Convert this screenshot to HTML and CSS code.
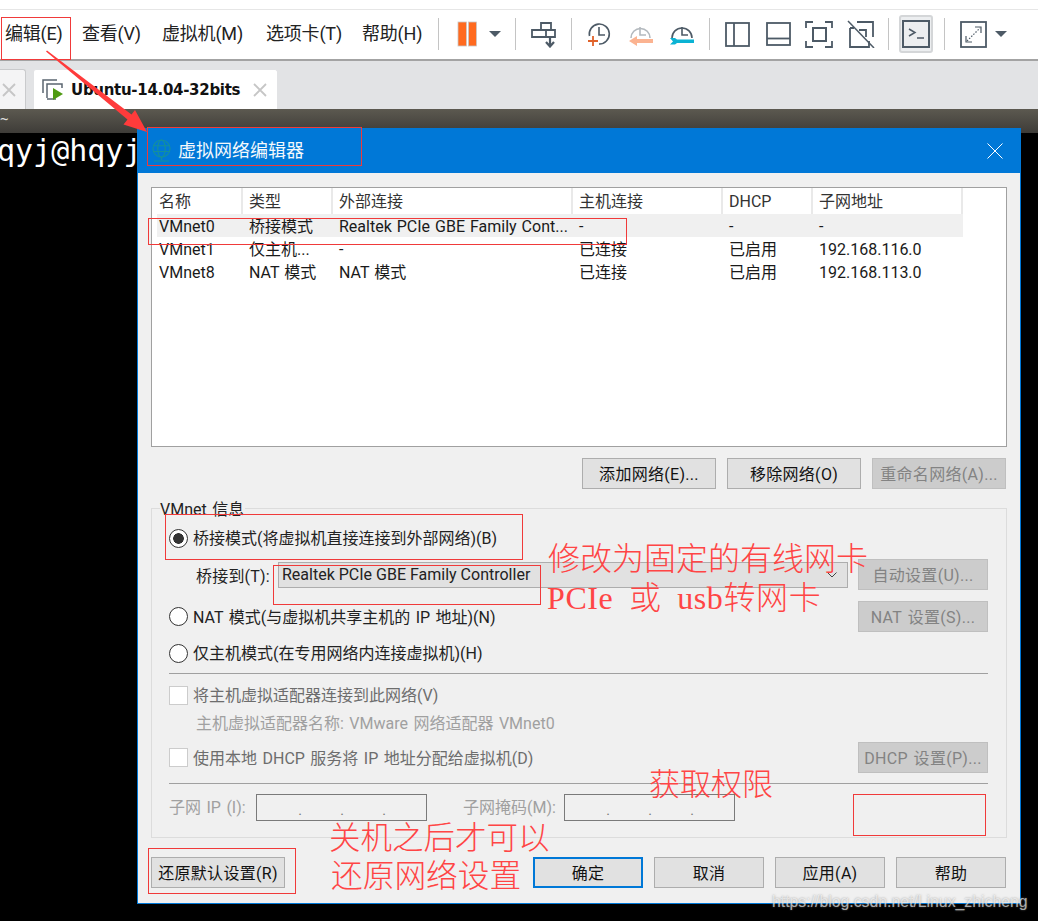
FILE: index.html
```html
<!DOCTYPE html>
<html lang="zh-CN">
<head>
<meta charset="utf-8">
<title>虚拟网络编辑器</title>
<link rel="stylesheet" href="styles.css">
</head>
<body>
<div class="app">
  <header class="toolbar">
    <nav class="menu">
      <span class="menu-item">编辑(E)</span>
      <span class="menu-item">查看(V)</span>
      <span class="menu-item">虚拟机(M)</span>
      <span class="menu-item">选项卡(T)</span>
      <span class="menu-item">帮助(H)</span>
    </nav>
    <i class="sep"></i>
    <svg class="ico pause" viewBox="0 0 20 28"><rect x="1" y="2" width="8.5" height="24" fill="#ff6a1f" stroke="#c9c9c9" stroke-width=".8"/><rect x="11.5" y="2" width="8" height="24" fill="#ff6a1f" stroke="#c9c9c9" stroke-width=".8"/></svg>
    <svg class="caret c1" viewBox="0 0 12 6"><path d="M0 0h12L6 6z" fill="#4d5a66"/></svg>
    <i class="sep s1"></i>
    <svg class="ico i-send" viewBox="0 0 28 28" fill="none" stroke="#4d5a66" stroke-width="1.8"><path d="M12 10V3h10v7M3 10h23v7H3zM17 10v7"/><path d="M21 17v9M17 22l4 4.5 4-4.5" stroke-width="2.2"/></svg>
    <i class="sep s2"></i>
    <svg class="ico i-clock" viewBox="0 0 28 28" fill="none" stroke="#4d5a66" stroke-width="1.6"><path d="M4.5 16A10 10 0 1 1 14 24"/><path d="M14 7v8h6"/><path d="M8 16v10M3 21h10" stroke="#e0622a" stroke-width="1.8"/></svg>
    <svg class="ico i-rev" viewBox="0 0 28 28" fill="none" stroke="#b3b9be" stroke-width="1.6"><path d="M4 18A9.5 9.5 0 1 1 23 18"/><path d="M13 7v8h6"/><path d="M26 19h-16v-3l-8 5 8 5v-3h16z" fill="#fbb391" stroke="none"/></svg>
    <svg class="ico i-mgr" viewBox="0 0 28 28" fill="none" stroke="#4d5a66" stroke-width="1.6"><path d="M4 18A10 10 0 1 1 24 18"/><path d="M14 7v8h6"/><path d="M2 18h5l2 1.500h17v3.500H9l-2 1.500H2l3-3z" fill="#0bb3d4" stroke="none"/></svg>
    <i class="sep s3"></i>
    <svg class="ico i-l1" viewBox="0 0 28 28" fill="none" stroke="#4d5a66" stroke-width="1.8"><rect x="2" y="3" width="23" height="23"/><path d="M10 3v23"/></svg>
    <svg class="ico i-l2" viewBox="0 0 28 28" fill="none" stroke="#4d5a66" stroke-width="1.8"><rect x="2" y="3" width="23" height="22"/><path d="M2 18.500h23"/></svg>
    <svg class="ico i-l3" viewBox="0 0 28 28" fill="none" stroke="#4d5a66" stroke-width="1.8"><path d="M1 8V2h7M20 2h7v6M27 21v6h-7M8 27H1v-6"/><rect x="8" y="8" width="13" height="13" stroke-width="2"/></svg>
    <svg class="ico i-l4" viewBox="0 0 28 28" fill="none" stroke="#4d5a66" stroke-width="1.8"><path d="M3 8v19h19v-6M10 2h16v15M12 10h7v7M3 8h4"/><path d="M1 1l26 27" stroke-width="1.500"/></svg>
    <i class="sep s5"></i>
    <span class="term-btn">
      <svg class="term" viewBox="0 0 28 28" fill="none" stroke="#4d5a66" stroke-width="2"><rect x="1" y="1" width="26" height="26"/><path d="M7 9l6 3.500-6 3.500M15 18h7" stroke-width="1.500"/></svg>
    </span>
    <i class="sep s4"></i>
    <svg class="ico i-full" viewBox="0 0 28 28" fill="none" stroke="#4d5a66" stroke-width="1.800"><rect x="2" y="2" width="25" height="25"/><path d="M8 21L21 8" stroke-dasharray="1.500 1.500" stroke-width="1.200"/><path d="M16 7h6v6M7 16v6h6" stroke-width="1.200"/></svg>
    <svg class="caret c2" viewBox="0 0 12 6"><path d="M0 0h12L6 6z" fill="#4d5a66"/></svg>
  </header>

  <div class="tabbar">
    <div class="tab tab-off"><svg class="tab-x" viewBox="0 0 14 14" fill="none" stroke="#c6c6c6" stroke-width="1.800"><path d="M1 1l12 12M13 1L1 13"/></svg></div>
    <div class="tab tab-on">
      <svg class="tab-ico" viewBox="0 0 22 22" fill="none" stroke="#5b6670" stroke-width="1.500"><path d="M1 14V1h14M5 19V5h15v4M5 20h9"/><path d="M11 9l10 6-10 6z" fill="#4f9a12" stroke="none"/></svg>
      <span class="tab-name">Ubuntu-14.04-32bits</span>
      <svg class="tab-x" viewBox="0 0 14 14" fill="none" stroke="#c6c6c6" stroke-width="1.800"><path d="M1 1l12 12M13 1L1 13"/></svg>
    </div>
  </div>

  <div class="terminal">
    <div class="term-head">~</div>
    <div class="term-line">qyj@hqyj</div>
  </div>
</div>

<section class="dialog">
  <div class="titlebar">
    <svg class="globe" viewBox="0 0 20 24" fill="none" stroke="#14909c" stroke-width="1.200"><circle cx="10" cy="10" r="9"/><ellipse cx="10" cy="10" rx="4" ry="9"/><path d="M1 7h18M1 13h18M10 19v3M2 23h16"/></svg>
    <span class="title">虚拟网络编辑器</span>
    <svg class="close" viewBox="0 0 16 16" fill="none" stroke="#fff" stroke-width="1"><path d="M.5.5l15 15M15.500.5l-15 15"/></svg>
  </div>
  <div class="body">
    <div class="list">
      <div class="row head"><span>名称</span><span>类型</span><span>外部连接</span><span>主机连接</span><span>DHCP</span><span>子网地址</span></div>
      <div class="row sel"><span>VMnet0</span><span>桥接模式</span><span>Realtek PCIe GBE Family Cont...</span><span>-</span><span>-</span><span>-</span></div>
      <div class="row"><span>VMnet1</span><span>仅主机...</span><span>-</span><span>已连接</span><span>已启用</span><span>192.168.116.0</span></div>
      <div class="row"><span>VMnet8</span><span>NAT 模式</span><span>NAT 模式</span><span>已连接</span><span>已启用</span><span>192.168.113.0</span></div>
    </div>

    <div class="actions">
      <button class="btn wide">添加网络(E)...</button>
      <button class="btn wide">移除网络(O)</button>
      <button class="btn wide off">重命名网络(A)...</button>
    </div>

    <div class="group">
      <div class="legend">VMnet 信息</div>
      <div class="opt r1"><i class="radio on"></i>桥接模式(将虚拟机直接连接到外部网络)(B)</div>
      <div class="bridge">
        <span class="bridge-label">桥接到(T):</span>
        <div class="combo"><span>Realtek PCIe GBE Family Controller</span>
          <svg class="chev" viewBox="0 0 10 6" fill="none" stroke="#444" stroke-width="1"><path d="M.5.500L5 5l4.500-4.500"/></svg>
        </div>
        <button class="btn side off">自动设置(U)...</button>
      </div>
      <div class="split r3">
        <div class="opt"><i class="radio"></i>NAT 模式(与虚拟机共享主机的 IP 地址)(N)</div>
        <button class="btn side off">NAT 设置(S)...</button>
      </div>
      <div class="opt r4"><i class="radio"></i>仅主机模式(在专用网络内连接虚拟机)(H)</div>
      <hr class="rule r5">
      <div class="opt dim r6"><i class="check"></i>将主机虚拟适配器连接到此网络(V)</div>
      <div class="adapter">主机虚拟适配器名称: VMware 网络适配器 VMnet0</div>
      <div class="split r8">
        <div class="opt dim"><i class="check"></i>使用本地 DHCP 服务将 IP 地址分配给虚拟机(D)</div>
        <button class="btn side off">DHCP 设置(P)...</button>
      </div>
      <hr class="rule r9">
      <div class="subnet">
        <span class="sub-l1">子网 IP (I):</span>
        <div class="ip"><b>.</b><b>.</b><b>.</b></div>
        <span class="sub-l2">子网掩码(M):</span>
        <div class="ip"><b>.</b><b>.</b><b>.</b></div>
      </div>
    </div>

    <div class="footer">
      <button class="btn wide">还原默认设置(R)</button>
      <div class="footer-right">
        <button class="btn mid primary">确定</button>
        <button class="btn mid">取消</button>
        <button class="btn mid">应用(A)</button>
        <button class="btn mid">帮助</button>
      </div>
    </div>
  </div>
</section>

<div class="marks">
  <i class="box b-menu"></i>
  <i class="box b-title"></i>
  <i class="box b-row"></i>
  <i class="box b-radio"></i>
  <i class="box b-combo"></i>
  <i class="box b-empty"></i>
  <i class="box b-reset"></i>
  <svg class="arrow" viewBox="0 0 1038 921"><path d="M47 50.500L131.500 114.500 135 110 147 132 123.500 124.500 127.500 119.500 46 51.500z" fill="#ff3b3b"/></svg>
  <span class="note n1">修改为固定的有线网卡</span>
  <span class="note n2">PCIe 或 usb转网卡</span>
  <span class="note n3">获取权限</span>
  <span class="note n4">关机之后才可以</span>
  <span class="note n5">还原网络设置</span>
  <span class="wm">https://blog.csdn.net/Linux_zhicheng</span>
</div>
</body>
</html>
```
FILE: styles.css
```css
* { box-sizing: border-box; }
html, body { margin: 0; padding: 0; }
body {
  width: 1038px;
  height: 921px;
  overflow: hidden;
  position: relative;
  background: #000;
  font-family: Roboto, "Noto Sans CJK SC", sans-serif;
  font-size: 16px;
  color: #1a1a1a;
}
.app { display: flex; flex-direction: column; height: 921px; }

/* toolbar */
.toolbar {
  height: 61px;
  flex: none;
  display: flex;
  align-items: center;
  padding-top: 9px;
  background: #fff;
  border-bottom: 2px solid #a3a3a3;
  box-shadow: inset 0 9px 0 #fff, inset 0 10px 0 #e6e6e6;
}
.menu {
  width: 438px;
  flex: none;
  display: grid;
  grid-template-columns: 77px 80px 104px 96px auto;
  padding-left: 5px;
}
.menu-item { font-size: 18px; line-height: 24px; white-space: nowrap; color: #222; letter-spacing: -.2px; }
.sep { width: 1px; height: 32px; background: #c4c4c4; flex: none; }
.ico { width: 28px; height: 28px; flex: none; }
.pause { width: 20px; margin-left: 18px; }
.caret { width: 12px; height: 6px; flex: none; }
.c1 { margin-left: 12px; }
.s1 { margin-left: 14px; }
.i-send { margin-left: 13px; }
.s2 { margin-left: 14px; }
.i-clock { margin-left: 13px; }
.i-rev { margin-left: 14px; }
.i-mgr { margin-left: 13px; }
.s3 { margin-left: 13px; }
.i-l1 { margin-left: 14px; }
.i-l2 { margin-left: 13px; }
.i-l3 { margin-left: 12px; }
.i-l4 { margin-left: 14px; }
.s5 { margin-left: 13px; }
.term-btn {
  width: 34px;
  height: 38px;
  margin-left: 10px;
  display: flex;
  align-items: center;
  justify-content: center;
  background: #eceef0;
  border: 2px solid #d4d6d8;
  border-radius: 3px;
  flex: none;
}
.term { width: 28px; height: 28px; }
.s4 { margin-left: 11px; }
.i-full { margin-left: 14px; }
.c2 { margin-left: 8px; }

/* tabs */
.tabbar {
  height: 48px;
  flex: none;
  display: flex;
  align-items: flex-end;
  gap: 7px;
  background: #e2e3e5;
}
.tab {
  height: 40px;
  background: #f4f4f5;
  border: 1px solid #c9cacc;
  border-bottom: 0;
  border-radius: 3px 3px 0 0;
  display: flex;
  align-items: center;
}
.tab-off { width: 26px; border-left: 0; padding-left: 2px; border-top-left-radius: 0; }
.tab-on { width: 245px; background: #fff; border-color: #e2e3e5; padding-left: 8px; }
.tab-ico { width: 22px; height: 22px; flex: none; }
.tab-name {
  margin-left: 7px;
  width: 182px;
  font: bold 15px/22px "DejaVu Sans", sans-serif;
  letter-spacing: -.3px;
  color: #111;
  white-space: nowrap;
}
.tab-x { width: 14px; height: 14px; flex: none; }

/* terminal */
.terminal { flex: 1; background: #000; color: #fff; overflow: hidden; }
.term-head {
  height: 24px;
  padding-top: 1px;
  background: linear-gradient(#5c5950, #3e3c38);
  color: #ddd;
  font: 14px/18px "DejaVu Sans Mono", monospace;
}
.term-line {
  margin-left: -3px;
  font: 30px/36px "DejaVu Sans Mono", monospace;
  white-space: nowrap;
}

/* dialog window */
.dialog {
  position: absolute;
  left: 137px;
  top: 128px;
  width: 884px;
  height: 776px;
  display: flex;
  flex-direction: column;
  background: #f0f0f0;
  border: 1px solid #0078d7;
  border-top: 0;
}
.titlebar {
  height: 45px;
  flex: none;
  display: flex;
  align-items: center;
  background: #0078d7;
  padding: 0 17px 0 14px;
}
.globe { width: 19px; height: 23px; flex: none; }
.title { margin-left: 7px; font-size: 18px; line-height: 24px; color: #f4f8fc; }
.close { width: 16px; height: 16px; margin-left: auto; }

.body { flex: 1; padding: 14px 13px 15px; display: flex; flex-direction: column; }

.list {
  height: 260px;
  flex: none;
  background: #fff;
  border: 1px solid #a0a0a0;
  padding-left: 5px;
}
.row {
  display: grid;
  grid-template-columns: 86px 90px 240px 150px 90px 150px;
  height: 23px;
  line-height: 25px;
  width: 806px;
  color: #1a1a1a;
  word-spacing: 1px;
}
.row span { padding-left: 6px; white-space: nowrap; overflow: hidden; }
.row span:first-child { padding-left: 2px; }
.row.head { height: 26px; line-height: 28px; color: #333; }
.row.head span { border-right: 2px solid #e9e9e9; height: 26px; }
.row.sel { background: #f0f0f0; }

.btn {
  height: 31px;
  padding: 1px 0 0;
  font: inherit;
  line-height: 27px;
  color: #111;
  background: #e1e1e1;
  border: 1px solid #adadad;
  white-space: nowrap;
  word-spacing: 1.500px;
  letter-spacing: .3px;
  flex: none;
}
.btn.off { background: #ccc; border-color: #bfbfbf; color: #838383; }
.btn.wide { width: 134px; }
.btn.side { width: 130px; }
.btn.mid { width: 110px; }
.btn.primary { border: 2px solid #0078d7; }

.actions { margin-top: 11px; display: flex; justify-content: flex-end; gap: 11px; padding-right: 1px; }

.group {
  margin-top: 19px;
  height: 330px;
  flex: none;
  border: 1px solid #dcdcdc;
  padding: 0 18px 0 17px;
  display: flex;
  flex-direction: column;
  word-spacing: 1.500px;
}
.legend {
  align-self: flex-start;
  margin: -10px 0 0 -9px;
  height: 20px;
  line-height: 22px;
  padding: 0 1px 0 0;
  background: #f0f0f0;
  color: #222;
}
.opt {
  display: flex;
  align-items: center;
  gap: 5px;
  height: 24px;
  padding-top: 2px;
  line-height: 22px;
  white-space: nowrap;
  color: #222;
}
.r1 { margin-top: 7px; }
.radio {
  width: 19px;
  height: 19px;
  margin-top: -2px;
  flex: none;
  border: 1px solid #333;
  border-radius: 50%;
  background: #fff;
}
.radio.on { background: radial-gradient(circle, #333 0 5px, #fff 5.600px); }
.check { width: 19px; height: 19px; margin-top: -2px; flex: none; border: 1px solid #ccc; background: #fff; }
.dim { color: #6d6d6d; }

.bridge { margin-top: 9px; height: 31px; display: flex; align-items: center; padding-left: 27px; }
.bridge-label { width: 82px; flex: none; white-space: nowrap; color: #222; letter-spacing: .2px; }
.combo {
  width: 570px;
  height: 26px;
  margin-right: 10px;
  flex: none;
  display: flex;
  align-items: center;
  justify-content: space-between;
  padding: 0 10px 0 3px;
  background: #e1e1e1;
  border: 1px solid #adadad;
  color: #222;
  white-space: nowrap;
  word-spacing: 0;
}
.chev { width: 10px; height: 6px; }
.split { display: flex; align-items: center; justify-content: space-between; height: 31px; }
.r3 { margin-top: 11px; }
.r4 { margin-top: 9px; }
.rule { margin: 0; border: 0; height: 1px; background: #a0a0a0; flex: none; }
.r5 { margin-top: 8px; }
.r6 { margin-top: 10px; height: 22px; }
.adapter { margin: 6px 0 0 27px; height: 22px; line-height: 24px; color: #a0a0a0; white-space: nowrap; }
.r8 { margin-top: 8px; }
.r9 { margin-top: 10px; }
.subnet { margin-top: 10px; height: 27px; display: flex; align-items: center; color: #a0a0a0; white-space: nowrap; line-height: 24px; }
.sub-l1 { width: 87px; flex: none; }
.sub-l2 { width: 101px; flex: none; margin-left: 36px; }
.ip {
  width: 171px;
  height: 27px;
  flex: none;
  display: flex;
  padding-left: 3px;
  background: #f0f0f0;
  border: 1px solid #7a7a7a;
  color: #777;
  font-size: 14px;
  line-height: 30px;
}
.ip b { width: 42px; font-weight: normal; text-align: right; }

.footer { margin-top: 19px; display: flex; justify-content: space-between; padding-right: 1px; }
.footer-right { display: flex; gap: 11px; }

/* annotations on top of the screenshot */
.marks { position: absolute; inset: 0; pointer-events: none; }
.box { position: absolute; border: 1px solid #f03a3a; }
.b-menu { left: 1px; top: 17px; width: 70px; height: 43px; }
.b-title { left: 147px; top: 127px; width: 215px; height: 39px; }
.b-row { left: 148px; top: 218px; width: 479px; height: 27px; }
.b-radio { left: 165px; top: 514px; width: 358px; height: 46px; }
.b-combo { left: 273px; top: 565px; width: 268px; height: 40px; }
.b-empty { left: 853px; top: 794px; width: 133px; height: 42px; }
.b-reset { left: 148px; top: 848px; width: 148px; height: 46px; }
.arrow { position: absolute; left: 0; top: 0; width: 1038px; height: 921px; }
.note {
  position: absolute;
  font-family: "Liberation Serif", "Noto Sans CJK SC", serif;
  font-weight: 300;
  font-size: 32px;
  line-height: 40px;
  color: #ff4545;
  white-space: nowrap;
}
.n1 { left: 548px; top: 539px; }
.n2 { left: 547px; top: 578px; letter-spacing: .6px; word-spacing: 7px; }
.n3 { left: 649px; top: 765px; font-size: 31px; }
.n4 { left: 329px; top: 819px; font-size: 31.500px; }
.n5 { left: 331px; top: 857px; font-size: 31.700px; }
.wm {
  position: absolute;
  left: 772px;
  top: 893px;
  font: 15.800px/18px "Liberation Sans", sans-serif;
  color: rgba(255,255,255,.62);
  text-shadow: 0 0 2px rgba(120,120,120,.7);
  white-space: nowrap;
}
```
